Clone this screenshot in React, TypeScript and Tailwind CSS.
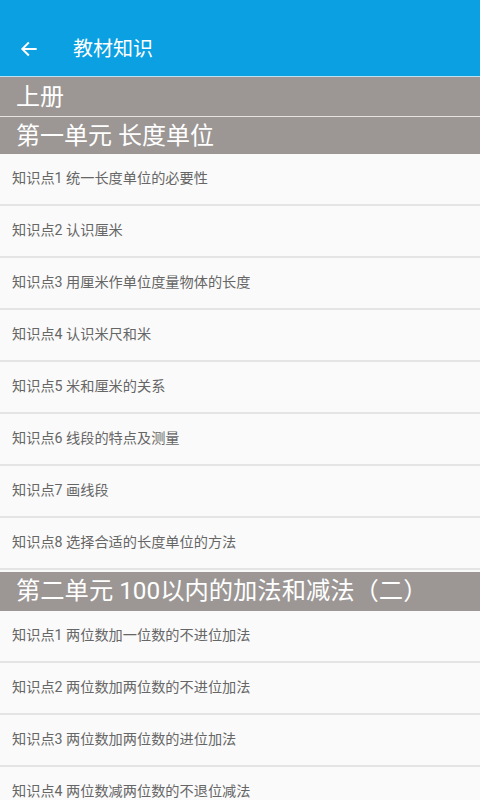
import React from 'react';

const units = [
  {
    title: '第一单元 长度单位',
    items: [
      '知识点1 统一长度单位的必要性',
      '知识点2 认识厘米',
      '知识点3 用厘米作单位度量物体的长度',
      '知识点4 认识米尺和米',
      '知识点5 米和厘米的关系',
      '知识点6 线段的特点及测量',
      '知识点7 画线段',
      '知识点8 选择合适的长度单位的方法',
    ],
  },
  {
    title: '第二单元 100以内的加法和减法（二）',
    items: [
      '知识点1 两位数加一位数的不进位加法',
      '知识点2 两位数加两位数的不进位加法',
      '知识点3 两位数加两位数的进位加法',
      '知识点4 两位数减两位数的不退位减法',
    ],
  },
];

const font = { fontFamily: 'Roboto, "Noto Sans CJK SC", sans-serif' };

export default function App() {
  return (
    <div className="w-[480px] h-[800px] overflow-hidden bg-[#fafafa]" style={font}>
      {/* 顶栏 */}
      <div className="h-[77px] bg-[#0aa0e2] flex items-center pt-[22px] border-b border-[#bfe3f5]">
        <div className="w-[56px] flex justify-center pl-[2px]">
          <svg width="20" height="20" viewBox="0 0 24 24" fill="none" stroke="white" strokeWidth="2.4" strokeLinecap="square">
            <path d="M20 12H5" />
            <path d="M11 5l-7 7 7 7" />
          </svg>
        </div>
        <span className="ml-[17px] text-white text-[20px] leading-none">教材知识</span>
      </div>

      <div className="h-[40px] bg-[#9c9795] text-white text-[24px] leading-none flex items-center px-[16px] border-b border-[#e6e4e3]">
        上册
      </div>

      {units.map((u, i) => (
        <div key={u.title}>
          <div
            className={
              i === 0
                ? 'h-[37px] bg-[#9c9795] text-white text-[24px] leading-none flex items-center px-[16px]'
                : 'h-[39px] mt-[2px] bg-[#9c9795] text-white text-[24.3px] leading-none flex items-center px-[16px]'
            }
          >
            {u.title}
          </div>
          {u.items.map((it) => (
            <div
              key={it}
              className="h-[52px] flex items-center px-[12px] text-[14.2px] text-[#666] border-b-2 border-[#e4e4e4]"
            >
              {it}
            </div>
          ))}
        </div>
      ))}
    </div>
  );
}
